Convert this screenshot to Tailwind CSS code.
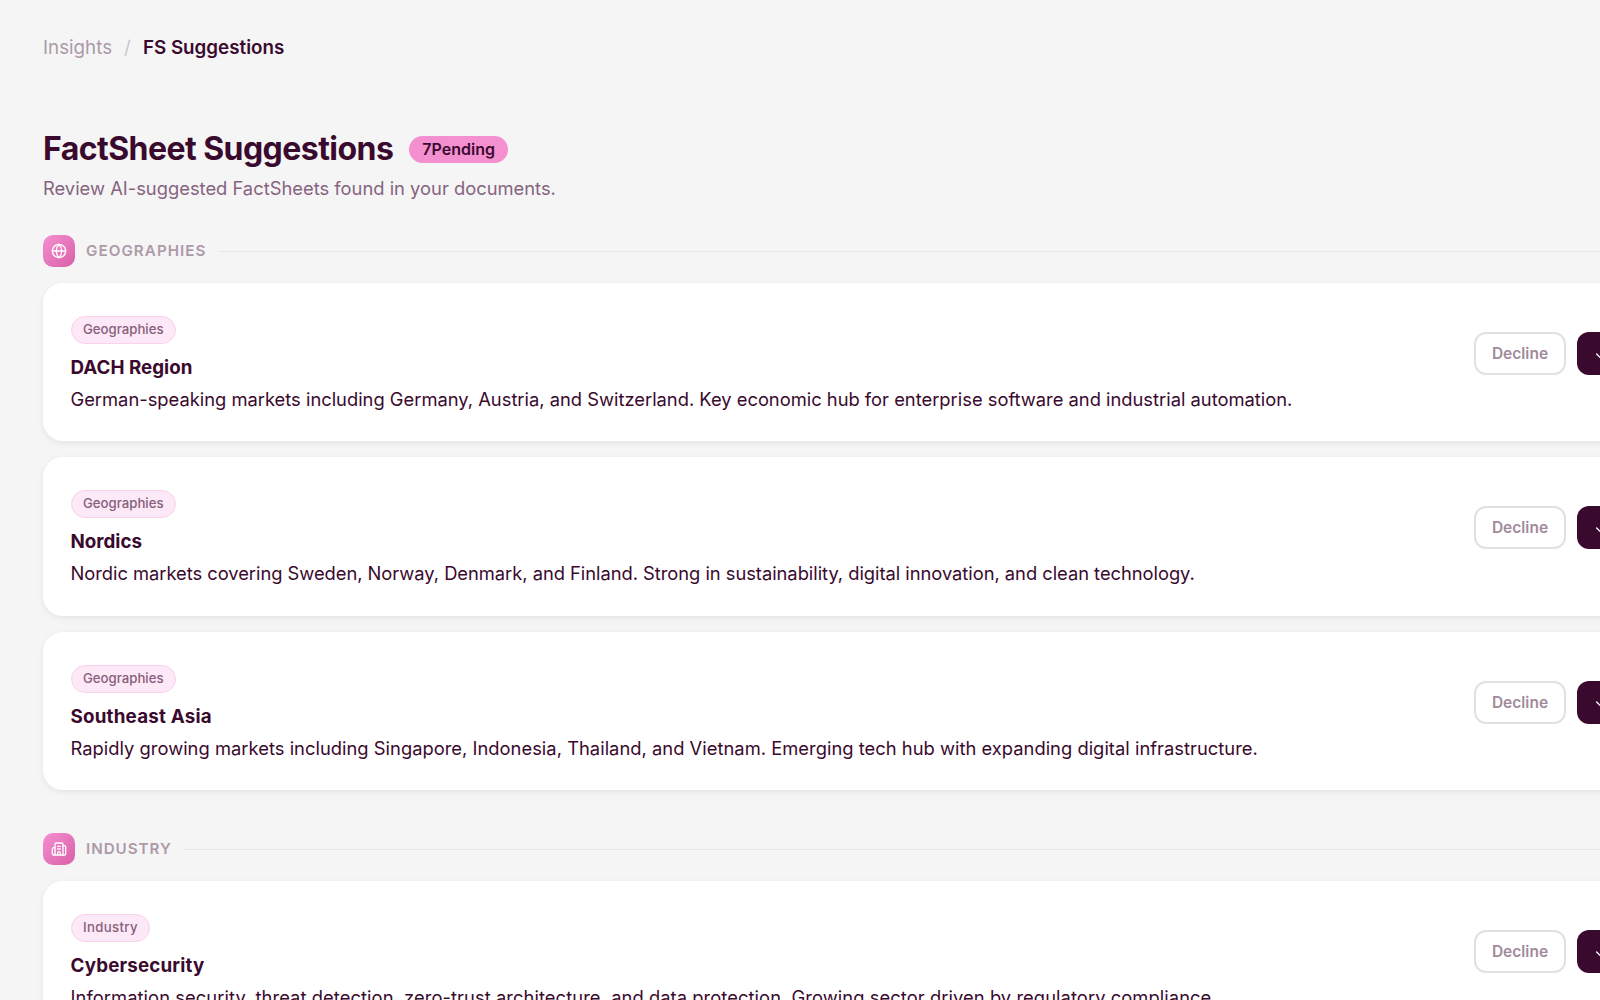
<!DOCTYPE html>
<html lang="en">
  <head>
    <meta charset="UTF-8" />
    <meta name="viewport" content="width=device-width, initial-scale=1.0" />
    <title>FactSheet Suggestions</title>
    <script src="https://cdn.jsdelivr.net/npm/@tailwindcss/browser@4"></script>
  </head>
  <body class="h-screen w-screen overflow-hidden bg-[#f5f5f5] font-['Inter',sans-serif] text-[#3a0a2e]">
    <main class="w-[1700px] pl-[43px]">
      <nav class="flex h-[96px] items-center gap-[12px] text-[18.8px]">
        <span class="text-[#ac9aa8]">Insights</span>
        <span class="text-[#cfc4cc]">/</span>
        <span class="font-semibold">FS Suggestions</span>
      </nav>

      <header class="mt-[30px]">
        <div class="flex items-center gap-[16px]">
          <h1 class="text-[32px] leading-[46px] font-bold tracking-[-0.55px]">FactSheet Suggestions</h1>
          <span class="flex h-[27px] items-center rounded-full bg-[#f48fd0] px-[13px] text-[16px] font-semibold">7Pending</span>
        </div>
        <p class="mt-[2px] text-[18.35px] leading-[28px] text-[#86647f]">Review AI-suggested FactSheets found in your documents.</p>
      </header>

      <section class="mt-[33px]">
        <div class="flex items-center gap-[11px]">
          <span class="flex size-[32px] items-center justify-center rounded-[10px] bg-gradient-to-br from-[#f48fd0] to-[#d95fa8]">
            <svg class="size-4" viewBox="0 0 24 24" fill="none" stroke="white" stroke-width="2" stroke-linecap="round" stroke-linejoin="round"><circle cx="12" cy="12" r="10"/><path d="M12 2a14.5 14.5 0 0 0 0 20 14.5 14.5 0 0 0 0-20"/><path d="M2 12h20"/></svg>
          </span>
          <h2 class="text-[15.2px] font-semibold tracking-[1.05px] text-[#ac9aa8]">GEOGRAPHIES</h2>
          <div class="h-px flex-1 bg-[#e8e8e8]"></div>
        </div>

        <div class="mt-[16px] flex flex-col gap-4">
          <article class="flex h-[158.4px] items-start justify-between rounded-[20px] bg-white pt-[33px] pr-[28px] pl-[27.5px] shadow-[0_2px_6px_rgba(0,0,0,0.07)]">
            <div>
              <span class="inline-flex h-[28px] items-center rounded-full border border-[#fad2ec] bg-[#fce8f6] px-[11.5px] text-[13.2px] font-medium text-[#86607b]">Geographies</span>
              <h3 class="mt-[11px] text-[18.8px] leading-[26px] font-bold">DACH Region</h3>
              <p class="mt-[4px] text-[18.33px] leading-[28px]">German-speaking markets including Germany, Austria, and Switzerland. Key economic hub for enterprise software and industrial automation.</p>
            </div>
            <div class="mt-[16px] flex gap-[11px]">
              <button class="h-[43px] w-[92px] rounded-[12px] border-2 border-[#e3e0e2] text-[15.5px] font-semibold text-[#a08a9b]">Decline</button>
              <button class="flex h-[43px] w-[95px] items-center rounded-[12px] bg-[#3a0a2e] pl-[17px]">
                <svg class="size-4" viewBox="0 0 24 24" fill="none" stroke="white" stroke-width="2" stroke-linecap="round" stroke-linejoin="round"><path d="M20 6 9 17l-5-5"/></svg>
              </button>
            </div>
          </article>

          <article class="flex h-[158.4px] items-start justify-between rounded-[20px] bg-white pt-[33px] pr-[28px] pl-[27.5px] shadow-[0_2px_6px_rgba(0,0,0,0.07)]">
            <div>
              <span class="inline-flex h-[28px] items-center rounded-full border border-[#fad2ec] bg-[#fce8f6] px-[11.5px] text-[13.2px] font-medium text-[#86607b]">Geographies</span>
              <h3 class="mt-[11px] text-[18.8px] leading-[26px] font-bold">Nordics</h3>
              <p class="mt-[4px] text-[18.33px] leading-[28px] tracking-[-0.03px]">Nordic markets covering Sweden, Norway, Denmark, and Finland. Strong in sustainability, digital innovation, and clean technology.</p>
            </div>
            <div class="mt-[16px] flex gap-[11px]">
              <button class="h-[43px] w-[92px] rounded-[12px] border-2 border-[#e3e0e2] text-[15.5px] font-semibold text-[#a08a9b]">Decline</button>
              <button class="flex h-[43px] w-[95px] items-center rounded-[12px] bg-[#3a0a2e] pl-[17px]">
                <svg class="size-4" viewBox="0 0 24 24" fill="none" stroke="white" stroke-width="2" stroke-linecap="round" stroke-linejoin="round"><path d="M20 6 9 17l-5-5"/></svg>
              </button>
            </div>
          </article>

          <article class="flex h-[158.4px] items-start justify-between rounded-[20px] bg-white pt-[33px] pr-[28px] pl-[27.5px] shadow-[0_2px_6px_rgba(0,0,0,0.07)]">
            <div>
              <span class="inline-flex h-[28px] items-center rounded-full border border-[#fad2ec] bg-[#fce8f6] px-[11.5px] text-[13.2px] font-medium text-[#86607b]">Geographies</span>
              <h3 class="mt-[11px] text-[18.8px] leading-[26px] font-bold tracking-[0.2px]">Southeast Asia</h3>
              <p class="mt-[4px] text-[18.33px] leading-[28px] tracking-[0.025px]">Rapidly growing markets including Singapore, Indonesia, Thailand, and Vietnam. Emerging tech hub with expanding digital infrastructure.</p>
            </div>
            <div class="mt-[16px] flex gap-[11px]">
              <button class="h-[43px] w-[92px] rounded-[12px] border-2 border-[#e3e0e2] text-[15.5px] font-semibold text-[#a08a9b]">Decline</button>
              <button class="flex h-[43px] w-[95px] items-center rounded-[12px] bg-[#3a0a2e] pl-[17px]">
                <svg class="size-4" viewBox="0 0 24 24" fill="none" stroke="white" stroke-width="2" stroke-linecap="round" stroke-linejoin="round"><path d="M20 6 9 17l-5-5"/></svg>
              </button>
            </div>
          </article>
        </div>
      </section>

      <section class="mt-[43px]">
        <div class="flex items-center gap-[11px]">
          <span class="flex size-[32px] items-center justify-center rounded-[10px] bg-gradient-to-br from-[#f48fd0] to-[#d95fa8]">
            <svg class="size-4" viewBox="0 0 24 24" fill="none" stroke="white" stroke-width="2" stroke-linecap="round" stroke-linejoin="round"><path d="M10 12h4"/><path d="M10 8h4"/><path d="M14 21v-3a2 2 0 0 0-4 0v3"/><path d="M6 10H4a2 2 0 0 0-2 2v7a2 2 0 0 0 2 2h16a2 2 0 0 0 2-2V9a2 2 0 0 0-2-2h-2"/><path d="M6 21V5a2 2 0 0 1 2-2h8a2 2 0 0 1 2 2v16"/></svg>
          </span>
          <h2 class="text-[15.2px] font-semibold tracking-[0.95px] text-[#ac9aa8]">INDUSTRY</h2>
          <div class="h-px flex-1 bg-[#e8e8e8]"></div>
        </div>

        <div class="mt-[16px] flex flex-col gap-4">
          <article class="flex h-[158.4px] items-start justify-between rounded-[20px] bg-white pt-[33px] pr-[28px] pl-[27.5px] shadow-[0_2px_6px_rgba(0,0,0,0.07)]">
            <div>
              <span class="inline-flex h-[28px] items-center rounded-full border border-[#fad2ec] bg-[#fce8f6] px-[11.5px] text-[13.2px] font-medium tracking-[0.35px] text-[#86607b]">Industry</span>
              <h3 class="mt-[11px] text-[18.8px] leading-[26px] font-bold tracking-[0.15px]">Cybersecurity</h3>
              <p class="mt-[4px] text-[18.33px] leading-[28px] tracking-[0.07px]">Information security, threat detection, zero-trust architecture, and data protection. Growing sector driven by regulatory compliance.</p>
            </div>
            <div class="mt-[16px] flex gap-[11px]">
              <button class="h-[43px] w-[92px] rounded-[12px] border-2 border-[#e3e0e2] text-[15.5px] font-semibold text-[#a08a9b]">Decline</button>
              <button class="flex h-[43px] w-[95px] items-center rounded-[12px] bg-[#3a0a2e] pl-[17px]">
                <svg class="size-4" viewBox="0 0 24 24" fill="none" stroke="white" stroke-width="2" stroke-linecap="round" stroke-linejoin="round"><path d="M20 6 9 17l-5-5"/></svg>
              </button>
            </div>
          </article>
        </div>
      </section>
    </main>
  </body>
</html>
